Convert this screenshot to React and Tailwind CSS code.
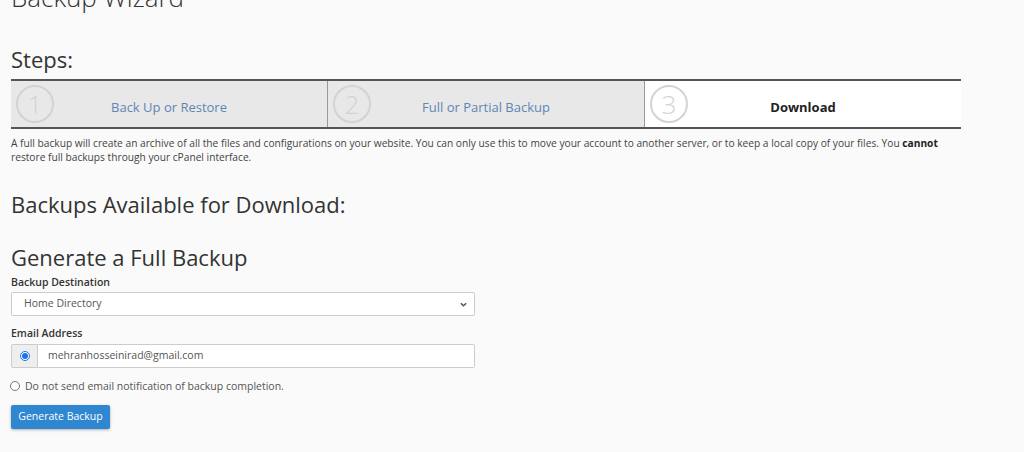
const steps = [
  { n: "1", label: "Back Up or Restore", active: false },
  { n: "2", label: "Full or Partial Backup", active: false },
  { n: "3", label: "Download", active: true },
];

const App = () => {
  return (
    <div className="h-[452px] w-[1024px] overflow-hidden bg-[#fafafa] font-['Open_Sans',sans-serif] text-[#333]">
      <div className="pl-[11px] w-[961px]">
        <h1 className="mt-[-18px] text-[26px] leading-[30px] font-light text-[#333]">Backup Wizard</h1>

        <h2 className="mt-[34px] text-[22px] leading-[26px] text-[#333]">Steps:</h2>

        <div className="mt-[7px] flex h-[50px] border-y-2 border-[#555]">
          {steps.map((s, i) => (
            <div
              key={s.n}
              className={
                "relative flex flex-1 items-center justify-center pt-[8px] " +
                (s.active ? "bg-white" : "bg-[#e8e8e8]") +
                (i > 0 ? " border-l border-[#999]" : "")
              }
            >
              <div className="absolute left-[5px] top-[4px] flex h-[38px] w-[38px] items-center justify-center rounded-full border-2 border-[#d3d3d3] text-[26px] leading-none font-light text-[#d3d3d3]">
                {s.n}
              </div>
              <span className={s.active ? "text-[13px] font-bold text-[#222]" : "text-[13px] text-[#5f86b3]"}>{s.label}</span>
            </div>
          ))}
        </div>

        <p className="mt-[7px] text-[10.2px] leading-[14px] text-[#444]">
          A full backup will create an archive of all the files and configurations on your website. You can only use this to move your account to another server, or to keep a local copy of your files. You <b className="text-[#222]">cannot</b> restore full backups through your cPanel interface.
        </p>

        <h2 className="mt-[27px] text-[22px] leading-[26px] text-[#333]">Backups Available for Download:</h2>

        <h2 className="mt-[27px] text-[22px] leading-[26px] text-[#333]">Generate a Full Backup</h2>

        <label className="mt-[5px] block text-[10.5px] leading-[14px] font-semibold text-[#333]">Backup Destination</label>
        <div className="mt-[3px] flex h-[24px] w-[464px] items-center justify-between rounded-[2px] border border-[#ccc] bg-white pl-[12px] pr-[6px]">
          <span className="text-[10.5px] text-[#555]">Home Directory</span>
          <svg width="9" height="9" viewBox="0 0 10 10" fill="none" stroke="#555" strokeWidth="1.6">
            <path d="M2 3.5l3 3 3-3" />
          </svg>
        </div>

        <label className="mt-[10px] block text-[10.5px] leading-[14px] font-semibold text-[#333]">Email Address</label>
        <div className="mt-[4px] flex h-[24px] w-[464px]">
          <div className="flex w-[27px] items-center justify-center rounded-l-[2px] border border-[#ccc] bg-[#eee]">
            <span className="flex h-[10px] w-[10px] items-center justify-center rounded-full border border-[#1a73e8] bg-white">
              <span className="h-[6px] w-[6px] rounded-full bg-[#1a73e8]" />
            </span>
          </div>
          <div className="flex flex-1 items-center rounded-r-[2px] border border-l-0 border-[#ccc] bg-white pl-[10px] text-[10.5px] text-[#555]">
            mehranhosseinirad@gmail.com
          </div>
        </div>

        <div className="mt-[11px] flex items-center gap-[5px] text-[10.5px] leading-[14px] text-[#555]">
          <span className="ml-[-1px] h-[10px] w-[10px] rounded-full border border-[#777] bg-white" />
          <span>Do not send email notification of backup completion.</span>
        </div>

        <button className="mt-[12px] h-[24px] w-[99px] rounded-[2px] bg-[#2f86d1] text-[10.5px] text-white shadow-[0_1px_3px_rgba(0,0,0,0.3)]">
          Generate Backup
        </button>
      </div>
    </div>
  );
};

export default App;
